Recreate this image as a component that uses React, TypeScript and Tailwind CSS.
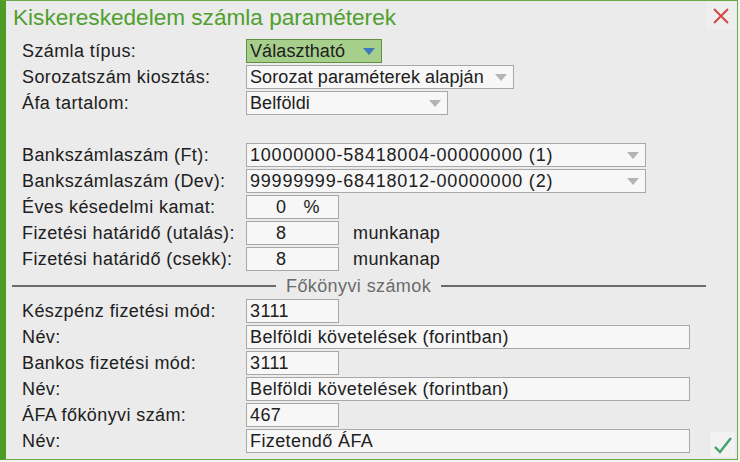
import React from "react";

const font = { fontFamily: '"Liberation Sans", Arial, sans-serif' };

const Arrow = ({ color = "#b4b4b4" }: { color?: string }) => (
  <svg width="12" height="7" viewBox="0 0 12 7" className="absolute right-[6px] top-[8px]">
    <polygon points="0,0 12,0 6,7" fill={color} />
  </svg>
);

const Select = ({ w, value, green, num }: { w: string; value: string; green?: boolean; num?: boolean }) => (
  <div
    className={`${w} h-[24px] relative flex items-center pl-[3px] border ${
      green ? "bg-[#a6cf8c] border-[#5f8f3f]" : "bg-[#f7f7f7] border-[#a8a8a8]"
    }`}
  >
    <span className={num ? "tracking-[0.8px]" : "tracking-[0.1px]"}>{value}</span>
    <Arrow color={green ? "#3d78bd" : "#b4b4b4"} />
  </div>
);

const Input = ({ w, children, pl = "pl-[3px]" }: { w: string; children?: React.ReactNode; pl?: string }) => (
  <div className={`${w} h-[24px] flex items-center ${pl} bg-[#f7f7f7] border border-[#a8a8a8]`}>{children}</div>
);

const Row = ({ label, children }: { label: string; children: React.ReactNode }) => (
  <div className="flex h-[24px] items-center">
    <div className="w-[224px] leading-[24px] whitespace-nowrap">{label}</div>
    {children}
  </div>
);

export default function App() {
  return (
    <div
      className="w-[740px] h-[462px] bg-[#f1f4ee] overflow-hidden text-[18px] tracking-[0.4px] text-[#202020]"
      style={font}
    >
      <div className="w-[738px] h-[460px] bg-[#ebebeb] border-l-[6px] border-t border-r border-b border-[#4e9c25] border-t-[#6aa94a] border-r-[#6aa94a] border-b-[#6aa94a] relative">
        <div className="h-[38px] flex items-start justify-between">
          <div className="pl-[7px] pt-[3px] text-[22.6px] tracking-normal text-[#4fa02e] leading-[28px]">
            Kiskereskedelem számla paraméterek
          </div>
          <div className="mt-[1px] mr-[1px] w-[30px] h-[28px] bg-[#eeeeee] flex items-center justify-center">
            <svg width="18" height="18" viewBox="0 0 18 18">
              <path d="M2 2 L16 16 M16 2 L2 16" stroke="#d6473f" strokeWidth="2" />
            </svg>
          </div>
        </div>

        <div className="pl-[16px] flex flex-col gap-[2px]">
          <Row label="Számla típus:">
            <Select w="w-[136px]" value="Választható" green />
          </Row>
          <Row label="Sorozatszám kiosztás:">
            <Select w="w-[268px]" value="Sorozat paraméterek alapján" />
          </Row>
          <Row label="Áfa tartalom:">
            <Select w="w-[202px]" value="Belföldi" />
          </Row>
          <div className="h-[24px]" />
          <Row label="Bankszámlaszám (Ft):">
            <Select w="w-[400px]" value="10000000-58418004-00000000 (1)" num />
          </Row>
          <Row label="Bankszámlaszám (Dev):">
            <Select w="w-[400px]" value="99999999-68418012-00000000 (2)" num />
          </Row>
          <Row label="Éves késedelmi kamat:">
            <Input w="w-[93px]" pl="pl-[29px]">
              <span>0</span>
              <span className="ml-[17px]">%</span>
            </Input>
          </Row>
          <Row label="Fizetési határidő (utalás):">
            <Input w="w-[93px]" pl="pl-[29px]">8</Input>
            <span className="ml-[14px]">munkanap</span>
          </Row>
          <Row label="Fizetési határidő (csekk):">
            <Input w="w-[93px]" pl="pl-[29px]">8</Input>
            <span className="ml-[14px]">munkanap</span>
          </Row>
          <div className="h-[24px] flex items-center -ml-[10px] mr-[31px] pt-[1px]">
            <div className="w-[264px] h-[2px] bg-[#6a6a6a]" />
            <span className="px-[10px] text-[#6b6b6b] leading-[20px]">Főkönyvi számok</span>
            <div className="flex-1 h-[2px] bg-[#6a6a6a]" />
          </div>
          <Row label="Készpénz fizetési mód:">
            <Input w="w-[93px]">3111</Input>
          </Row>
          <Row label="Név:">
            <Input w="w-[444px]">Belföldi követelések (forintban)</Input>
          </Row>
          <Row label="Bankos fizetési mód:">
            <Input w="w-[93px]">3111</Input>
          </Row>
          <Row label="Név:">
            <Input w="w-[444px]">Belföldi követelések (forintban)</Input>
          </Row>
          <Row label="ÁFA főkönyvi szám:">
            <Input w="w-[93px]">467</Input>
          </Row>
          <Row label="Név:">
            <Input w="w-[444px]">Fizetendő ÁFA</Input>
          </Row>
        </div>

        <div className="absolute right-[2px] bottom-[2px] w-[25px] h-[25px] bg-[#f2f2f2] flex items-center justify-center">
          <svg width="20" height="18" viewBox="0 0 20 18">
            <path d="M2 11 L7 16 L18 2" fill="none" stroke="#45a06c" strokeWidth="2.4" />
          </svg>
        </div>
      </div>
    </div>
  );
}
